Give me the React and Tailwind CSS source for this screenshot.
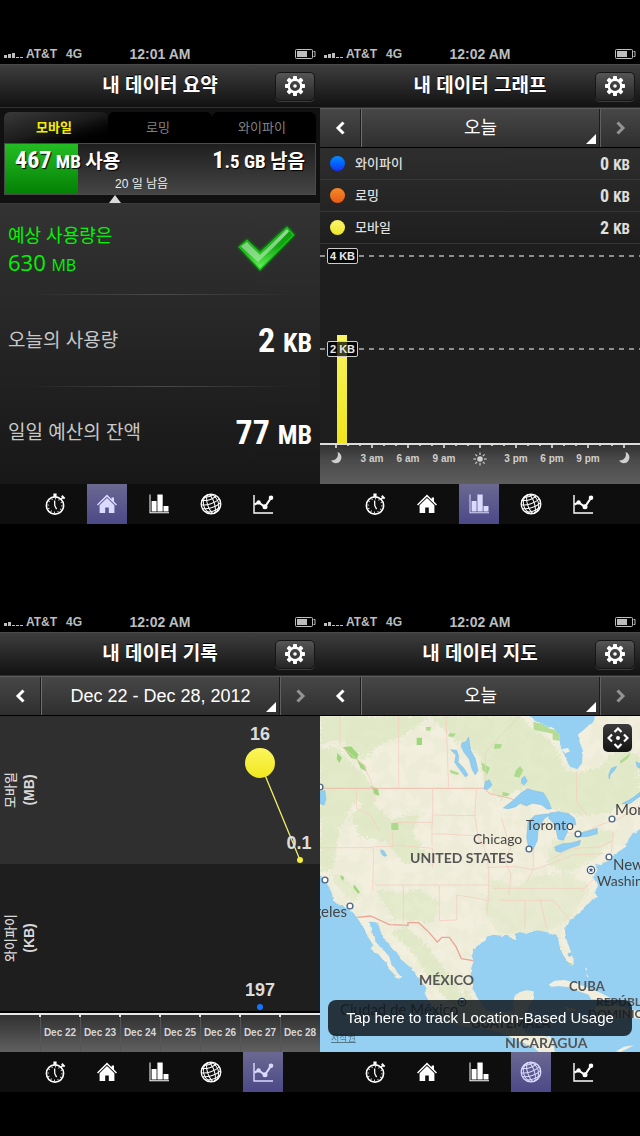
import { useState } from "react";
import clsx from "clsx";

/* ---------- ICONS ---------- */

const GearIcon = () => (
  <svg viewBox="0 0 20 20" className="size-5" fill="#fff" aria-hidden="true">
    {[0, 45, 90, 135, 180, 225, 270, 315].map((a) => (
      <rect key={a} x="8" y="0" width="4" height="4" rx="0.8" transform={`rotate(${a} 10 10)`} />
    ))}
    <circle cx="10" cy="10" r="6.3" fill="none" stroke="#fff" strokeWidth="2.4" />
    <circle cx="10" cy="10" r="1.8" />
  </svg>
);

const StopwatchIcon = () => (
  <svg viewBox="0 0 22 22" className="size-[22px]" fill="none" stroke="currentColor" aria-hidden="true">
    <circle cx="11" cy="12.5" r="8.6" strokeWidth="1.6" />
    <circle cx="11" cy="12.5" r="6.8" strokeWidth="1.4" strokeDasharray="0.8 2.76" />
    <path d="M11 0.5v3.4" strokeWidth="3.2" />
    <path d="M17 6.2l2.2-2.2" strokeWidth="1.6" />
    <path d="M17.8 2.8l2.8 2.8" strokeWidth="2" />
    <path d="M10.6 7.5l.2 5.2 1.8 3.4" strokeWidth="1.3" />
  </svg>
);

const HomeIcon = () => (
  <svg viewBox="0 0 22 22" className="size-[22px]" fill="currentColor" aria-hidden="true">
    <path d="M11 1.6L1 11.4l1 1L11 3.8l9 8.6 1-1-3-2.8V4.6h-2.4v1.7z" />
    <path d="M11 5L3.6 12.2V20h5.6v-5.6h3.6V20h5.6v-7.8z" />
  </svg>
);

const BarsIcon = () => (
  <svg viewBox="0 0 22 22" className="size-[22px]" fill="currentColor" aria-hidden="true">
    <path d="M1.5 1.5h1v17.8H21v1H1.5z" />
    <path d="M3.6 8h5v10.6h-5zM9.4 1.5h5.3v17.1H9.4zM15.5 13h5v5.6h-5z" />
  </svg>
);

const GlobeIcon = () => (
  <svg viewBox="0 0 22 22" className="size-[22px]" fill="none" stroke="currentColor" aria-hidden="true">
    <circle cx="11" cy="11" r="9.8" strokeWidth="1.3" />
    <g transform="rotate(-18 11 11)" strokeWidth="1">
      <ellipse cx="11" cy="11" rx="3.4" ry="9.8" />
      <ellipse cx="11" cy="11" rx="7.4" ry="9.8" />
      <path d="M3.6 4.8c4 2.2 10.8 2.2 14.8 0M1.4 8.6c5 2.8 14.2 2.8 19.2 0M1.4 12.6c5 2.8 14.2 2.8 19.2 0M3.2 16.6c4.6 2.2 11 2.2 15.6 0M6.4 2.6c3 1.1 6.2 1.1 9.2 0" />
    </g>
  </svg>
);

const TrendIcon = () => (
  <svg viewBox="0 0 22 22" className="size-[22px]" fill="none" stroke="currentColor" aria-hidden="true">
    <path d="M2 2v18h19" strokeWidth="1.4" />
    <path d="M2.5 11.5l4-2 6.5 4.4 6-9" strokeWidth="2" />
    <g fill="currentColor" stroke="none">
      <circle cx="6.6" cy="9.4" r="2.2" />
      <circle cx="13" cy="13.8" r="2.5" />
      <circle cx="19" cy="4.8" r="2.3" />
    </g>
  </svg>
);

const Chevron = ({ flip }) => (
  <svg viewBox="0 0 10 14" className="h-3.5 w-2.5" fill="none" aria-hidden="true">
    <path
      d={flip ? "M1.5 1.5L7 7l-5.5 5.5" : "M8.5 1.5L3 7l5.5 5.5"}
      stroke={flip ? "#949494" : "#fff"}
      strokeWidth="3"
    />
  </svg>
);

const CheckMark = () => (
  <svg viewBox="0 0 60 52" className="h-[52px] w-[60px] overflow-visible" role="img" aria-label="OK">
    <defs>
      <linearGradient id="check-fill" x1="0" y1="0" x2="0" y2="1">
        <stop offset="0" stopColor="#0c9a0c" />
        <stop offset="0.45" stopColor="#12a812" />
        <stop offset="1" stopColor="#6cf55e" />
      </linearGradient>
      <linearGradient id="check-shine" x1="0" y1="0" x2="0" y2="1">
        <stop offset="0" stopColor="#fff" stopOpacity="0.6" />
        <stop offset="1" stopColor="#fff" stopOpacity="0.35" />
      </linearGradient>
      <filter id="check-glow" x="-20%" y="-20%" width="140%" height="140%">
        <feGaussianBlur stdDeviation="1.2" />
      </filter>
    </defs>
    <path d="M1 24l9-8 13 12L50 3l8 9-35 36z" fill="#0b8a0b" stroke="#0b8a0b" filter="url(#check-glow)" />
    <path d="M2.5 24L10 17.5l13 12.5L50 4.5l6.5 7.5L23 46.5z" fill="url(#check-fill)" stroke="#1fc41f" strokeWidth="1.2" />
    <path d="M4 23.5l6-4.5 13 13L50 6l2 2.5L38 23 21 39z" fill="url(#check-shine)" />
  </svg>
);

/* ---------- SHARED PARTS ---------- */

const StatusBar = ({ time, bars }) => (
  <div className="grid h-5 grid-cols-[1fr_auto_1fr] items-center bg-black px-1 text-xs font-bold text-[#bdbdbd]">
    <div className="flex items-center gap-[3px]">
      <svg viewBox="0 0 19 10" className="h-2.5 w-[19px]" fill="#bdbdbd" role="img" aria-label="Signal">
        {[0, 1, 2, 3, 4].map((i) => {
          const h = i < bars ? 3 + i : 1;
          return <rect key={i} x={i * 4} y={9 - h} width="3" height={h} />;
        })}
      </svg>
      <span>AT&amp;T</span>
      <span className="ml-1.5">4G</span>
    </div>
    <span className="text-sm">{time}</span>
    <svg viewBox="0 0 21 11" className="h-[11px] w-[21px] justify-self-end" role="img" aria-label="Battery">
      <rect x="0.5" y="0.5" width="17" height="9" rx="1" fill="none" stroke="#bdbdbd" />
      <rect x="2" y="2" width="10" height="6" fill="#bdbdbd" />
      <path d="M18.5 2.5h1.5v5h-1.5" fill="none" stroke="#bdbdbd" />
    </svg>
  </div>
);

const NavBar = ({ title }) => (
  <header className="grid h-11 grid-cols-[1fr_auto_1fr] items-center border-t border-b border-t-[#4a4a4a] border-b-[#303030] bg-linear-to-b from-[#3e3e3e] to-[#121212] px-[5px]">
    <h1 className="col-start-2 text-[19px] leading-6 font-bold text-white [text-shadow:0_-1px_0_#000]">
      {title}
    </h1>
    <button
      type="button"
      aria-label="Settings"
      className="flex h-[29px] w-10 items-center justify-center justify-self-end rounded-[5px] border border-[#161616] bg-linear-to-b from-[#555] to-[#262626] shadow-[0_1px_0_#3c3c3c]"
    >
      <GearIcon />
    </button>
  </header>
);

const RangeBar = ({ label }) => (
  <div className="grid h-10 shrink-0 grid-cols-[41px_1fr_40px] border-t border-b border-t-[#5c5c5c] border-b-black bg-linear-to-b from-[#474747] to-[#2f2f2f]">
    <button type="button" aria-label="Previous" className="flex items-center justify-center border-r border-[#1c1c1c]">
      <Chevron />
    </button>
    <div className="relative border-r border-l border-r-[#1c1c1c] border-l-[#707070]">
      <select
        aria-label="Period"
        className="block size-full appearance-none bg-transparent text-center text-lg leading-6 text-white"
      >
        <option>{label}</option>
      </select>
      <svg viewBox="0 0 10 10" className="pointer-events-none absolute right-[3px] bottom-[3px] size-2.5" aria-hidden="true">
        <path d="M10 0v10H0z" fill="#fff" />
      </svg>
    </div>
    <button type="button" aria-label="Next" className="flex items-center justify-center border-l border-[#606060]">
      <Chevron flip />
    </button>
  </div>
);

const TABS = [
  { id: "plan", label: "Plan", Icon: StopwatchIcon },
  { id: "home", label: "Home", Icon: HomeIcon },
  { id: "graph", label: "Graph", Icon: BarsIcon },
  { id: "map", label: "Map", Icon: GlobeIcon },
  { id: "history", label: "History", Icon: TrendIcon },
];

const TabBar = ({ active }) => (
  <nav className="flex h-10 shrink-0 justify-center gap-3 bg-[#0e0e0e] pr-0.5">
    {TABS.map(({ id, label, Icon }) => (
      <button
        key={id}
        type="button"
        aria-label={label}
        className={clsx(
          "flex w-10 items-center justify-center",
          id === active ? "bg-linear-to-b from-[#6b6890] to-[#4c4988] text-[#dcd9ff]" : "text-white"
        )}
      >
        <Icon />
      </button>
    ))}
  </nav>
);

const Screen = ({ title, time, bars, tab, children }) => (
  <section className="flex flex-col py-11">
    <StatusBar time={time} bars={bars} />
    <NavBar title={title} />
    <div className="flex flex-1 flex-col">{children}</div>
    <TabBar active={tab} />
  </section>
);

/* ---------- SUMMARY ---------- */

const NARROW = "[font-family:'Roboto_Condensed','Roboto','Noto_Sans_CJK_KR',sans-serif]";

const Divider = () => (
  <div className="mx-6 h-px bg-linear-to-r from-transparent via-[#4a4a4a] to-transparent" />
);

const Stat = ({ label, value, unit }) => (
  <div className="flex h-[91px] items-center justify-between px-2">
    <span className="text-[19px] leading-6 text-[#c8c8c8]">{label}</span>
    <span className={clsx(NARROW, "pt-0.5 text-[34px] leading-10 font-bold text-white")}>
      {value} <span className="text-[26px]">{unit}</span>
    </span>
  </div>
);

const Summary = () => {
  const [kind, setKind] = useState("모바일");

  return (
    <>
      <div className="bg-[#111] px-1 pt-1">
        <div className="flex h-[31px]">
          {["모바일", "로밍", "와이파이"].map((name) => (
            <button
              key={name}
              type="button"
              onClick={() => setKind(name)}
              className={clsx(
                "flex-1 rounded-t-md pr-1 text-[13px] leading-4",
                name === kind
                  ? "bg-linear-to-br from-[#3a3a3a] via-[#1c1c1c] to-black font-bold text-[#f5ee00]"
                  : "bg-black text-[#808080]"
              )}
            >
              {name}
            </button>
          ))}
        </div>
        <div className="relative h-[52px] border border-[#4a4a4a] bg-linear-to-b from-[#1f1f1f] to-[#454545]">
          <div className="absolute inset-y-0 left-0 w-[73px] bg-linear-to-b from-[#23bd23] to-[#038003]" />
          <div
            className={clsx(
              NARROW,
              "relative flex justify-between px-2.5 text-[19px] leading-8 font-bold text-white [text-shadow:1px_1px_1px_#000]"
            )}
          >
            <span><span className="text-2xl leading-8">467</span> MB 사용</span>
            <span><span className="text-2xl leading-8">1</span>.5 GB 남음</span>
          </div>
          <div className="relative pl-[110px] text-xs leading-3 text-[#eee]">20 일 남음</div>
        </div>
        <svg viewBox="0 0 12 8" className="ml-[105px] block h-2 w-3" aria-hidden="true">
          <path d="M6 0l6 8H0z" fill="#dadada" />
        </svg>
      </div>

      <div className="flex-1 border-t border-[#3a3a3a] bg-linear-to-b from-[#333] to-[#171717]">
        <div className="flex h-[90px] items-center justify-between pr-[23px] pl-2 text-[#00f500]">
          <div>
            <p className="text-lg leading-7">예상 사용량은</p>
            <p className="text-[22px] leading-6 [font-family:'Open_Sans','Noto_Sans',sans-serif]">
              630 <span className="text-base leading-6">MB</span>
            </p>
          </div>
          <CheckMark />
        </div>
        <Divider />
        <Stat label="오늘의 사용량" value="2" unit="KB" />
        <Divider />
        <Stat label="일일 예산의 잔액" value="77" unit="MB" />
      </div>
    </>
  );
};

/* ---------- GRAPH ---------- */

const LEGEND = [
  { name: "와이파이", value: "0", dot: "bg-linear-to-b from-[#0a8cff] to-[#1a2cf5]" },
  { name: "로밍", value: "0", dot: "bg-linear-to-b from-[#f58a28] to-[#e85a14]" },
  { name: "모바일", value: "2", dot: "bg-linear-to-b from-[#fbf56a] to-[#f0e61e]" },
];

const HOURS = ["moon", "3 am", "6 am", "9 am", "sun", "3 pm", "6 pm", "9 pm", "moon"];

const UsageGraph = () => (
  <svg viewBox="0 0 320 240" className="block w-full" role="img" aria-label="Usage today">
    <defs>
      <linearGradient id="hour-axis" x1="0" y1="0" x2="0" y2="1">
        <stop offset="0" stopColor="#303030" />
        <stop offset="0.4" stopColor="#4a4a4a" />
        <stop offset="1" stopColor="#5e5e5e" />
      </linearGradient>
      <linearGradient id="usage-bar" x1="0" y1="0" x2="0" y2="1">
        <stop offset="0" stopColor="#f9f560" />
        <stop offset="1" stopColor="#efe51c" />
      </linearGradient>
    </defs>
    <rect width="320" height="240" fill="#1e1e1e" />
    <rect y="200" width="320" height="40" fill="url(#hour-axis)" />
    <rect x="17" y="91" width="10" height="108" fill="url(#usage-bar)" />
    {[{ y: 12, text: "4 KB" }, { y: 105, text: "2 KB" }].map(({ y, text }) => (
      <g key={y}>
        <path d={`M0 ${y}h5M39 ${y}H320`} stroke="#b4b4b4" strokeWidth="1.4" strokeDasharray="5 5" />
        <rect x="7.5" y={y - 7.5} width="30" height="15" rx="1.5" fill="#000" fillOpacity="0.75" stroke="#ccc" />
        <text x="22.5" y={y + 4} fontSize="11" fontWeight="bold" fill="#e8e8e8" textAnchor="middle">{text}</text>
      </g>
    ))}
    <rect y="199" width="320" height="2" fill="#dcdcdc" />
    {Array.from({ length: 25 }, (_, i) => (
      <rect key={i} x={15 + i * 12} y="201" width="2" height={i % 3 === 0 ? 3 : 1} fill="#c0c0c0" />
    ))}
    {HOURS.map((h, i) => {
      const x = 16 + i * 36;
      if (h === "moon") {
        return (
          <path
            key={i}
            d={`M${x + 1.5} 208a5.7 5.7 0 1 1-6.5 8.5a6.2 6.2 0 0 0 6.5-8.5z`}
            fill="#cfcfcf"
          />
        );
      }
      if (h === "sun") {
        return (
          <g key={i} stroke="#cfcfcf" strokeWidth="1.2">
            <circle cx={x} cy="215" r="2.8" fill="#cfcfcf" stroke="none" />
            {[0, 45, 90, 135, 180, 225, 270, 315].map((a) => (
              <path key={a} d={`M${x} 208.4v2.6`} transform={`rotate(${a} ${x} 215)`} />
            ))}
          </g>
        );
      }
      return (
        <text key={i} x={x} y="218" fontSize="10" fontWeight="bold" fill="#cfcfcf" textAnchor="middle">{h}</text>
      );
    })}
  </svg>
);

const Graph = () => (
  <>
    <RangeBar label="오늘" />
    <ul className="bg-linear-to-b from-[#2e2e2e] to-[#1e1e1e]">
      {LEGEND.map(({ name, value, dot }) => (
        <li key={name} className="flex h-8 items-center border-b border-[#363636] px-2.5">
          <span className={clsx("size-[15px] rounded-full", dot)} />
          <span className="ml-2.5 text-[13px] leading-5 font-medium text-[#dedede]">{name}</span>
          <span className={clsx(NARROW, "ml-auto pt-0.5 text-lg leading-6 font-bold text-[#dedede]")}>
            {value} <span className="text-[15px]">KB</span>
          </span>
        </li>
      ))}
    </ul>
    <div className="flex-1 bg-[#1e1e1e]">
      <UsageGraph />
    </div>
  </>
);

/* ---------- HISTORY ---------- */

const DAYS = ["Dec 22", "Dec 23", "Dec 24", "Dec 25", "Dec 26", "Dec 27", "Dec 28"];

const History = () => (
  <>
    <RangeBar label="Dec 22 - Dec 28, 2012" />
    <svg viewBox="0 0 320 336" className="block w-full" role="img" aria-label="Usage history">
      <defs>
        <linearGradient id="day-axis" x1="0" y1="0" x2="0" y2="1">
          <stop offset="0" stopColor="#2e2e2e" />
          <stop offset="1" stopColor="#606060" />
        </linearGradient>
        <linearGradient id="mobile-dot" x1="0" y1="0" x2="0" y2="1">
          <stop offset="0" stopColor="#fbf65c" />
          <stop offset="1" stopColor="#f0e71e" />
        </linearGradient>
      </defs>
      <rect width="320" height="148" fill="#2f2f2f" />
      <rect y="148" width="320" height="149" fill="#1e1e1e" />
      <rect y="295" width="320" height="2" fill="#000" />
      <rect y="297" width="320" height="39" fill="url(#day-axis)" />
      <rect y="297" width="320" height="2" fill="#e6e6e6" />
      {DAYS.map((day, i) => (
        <g key={day}>
          <rect x={40 + i * 40} y="300" width="1" height="36" fill="#555" />
          <rect x={39 + i * 40} y="297" width="2" height="4" fill="#e6e6e6" />
          <text x={60 + i * 40} y="320" fontSize="10" fontWeight="bold" fill="#d6d6d6" textAnchor="middle">{day}</text>
        </g>
      ))}

      <g fill="#d8d8d8" textAnchor="middle">
        <g transform="translate(15 74) rotate(-90)">
          <text fontSize="13" fontWeight="500">모바일</text>
          <text y="19" fontSize="14" fontWeight="bold">(MB)</text>
        </g>
        <g transform="translate(15 222) rotate(-90)">
          <text fontSize="13" fontWeight="500">와이파이</text>
          <text y="19" fontSize="14" fontWeight="bold">(KB)</text>
        </g>
      </g>

      <path d="M260 47l40 97" stroke="#f3ee6a" strokeWidth="1.3" />
      <g fill="#dcdcdc" fontSize="18" fontWeight="bold" textAnchor="middle">
        <text x="260" y="24">16</text>
        <text x="299" y="133">0.1</text>
        <text x="260" y="280">197</text>
      </g>
      <circle cx="260" cy="47" r="15" fill="url(#mobile-dot)" />
      <circle cx="300" cy="144" r="3" fill="#f5ee3c" />
      <circle cx="260" cy="291" r="3" fill="#1478ff" />
    </svg>
  </>
);

/* ---------- MAP ---------- */

const CITIES = [
  [0, 71], [209, 133], [258, 118], [292, 103], [289, 141], [5, 164], [30, 190],
];

const CAPITALS = [[271, 154], [142, 286]];

const UsMap = () => (
  <svg
    viewBox="0 0 320 336"
    preserveAspectRatio="xMidYMid slice"
    className="absolute inset-0 size-full"
    role="img"
    aria-label="Map of North America"
  >
    <defs>
      <clipPath id="land-clip">
        <use href="#land" />
      </clipPath>
      <filter id="rough" x="-5%" y="-5%" width="110%" height="110%">
        <feTurbulence type="fractalNoise" baseFrequency="0.12" numOctaves="3" seed="4" result="n" />
        <feDisplacementMap in="SourceGraphic" in2="n" scale="30" xChannelSelector="R" yChannelSelector="G" />
        <feGaussianBlur stdDeviation="1" />
      </filter>
      <filter id="coast" x="-5%" y="-5%" width="110%" height="110%">
        <feTurbulence type="fractalNoise" baseFrequency="0.2" numOctaves="2" seed="9" result="n" />
        <feDisplacementMap in="SourceGraphic" in2="n" scale="3" xChannelSelector="R" yChannelSelector="G" />
      </filter>
      <filter id="speckle" x="0" y="0" width="100%" height="100%">
        <feTurbulence type="fractalNoise" baseFrequency="0.07" numOctaves="4" seed="21" result="n" />
        <feColorMatrix in="n" type="matrix" values="0 0 0 0 0  0 0 0 0 0  0 0 0 0 0  0 0 0 -6 3.4" result="m" />
        <feComposite in="SourceGraphic" in2="m" operator="out" />
      </filter>
      <path
        id="land"
        transform="scale(0.3333) translate(0 432)"
        d="M-10-440V35L0 45 14 60 24 76 36 100 40 125 58 134 75 140 100 158 112 175 124 192 135 210 140 226 150 240 160 256 152 265 164 278 175 282 190 300 200 310 205 325 222 342 236 361 243 350 232 338 225 325 214 312 208 290 194 274 180 262 170 246 160 228 152 205 149 185 160 186 176 195 182 215 190 236 206 250 216 266 232 280 250 305 275 325 290 345 305 365 320 385 313 400 322 418 340 440 380 480 430 500 510 510 545 520 600 545 640 560 660 580 706 580 698 545 690 528 650 524 615 520 603 500 606 480 615 472 626 440 640 410 641 394 620 391 600 396 585 406 580 430 578 452 540 458 510 456 490 440 472 414 458 385 452 350 454 325 460 305 454 285 458 268 472 258 482 248 496 244 500 230 520 224 545 227 560 224 568 232 590 238 584 222 600 216 620 222 636 214 655 211 680 216 692 226 704 222 714 228 718 256 728 282 740 300 752 317 761 312 760 294 750 268 740 240 735 216 738 198 746 184 760 174 772 162 790 148 800 134 820 120 830 108 826 92 834 78 820 52 832 30 826 12 846 16 850 8 868 2 888-20 918-40 926-62 938-80 970-98V-440H826L822-418 800-398 774-376 780-350 789-330 786-290 772-272 750-280 738-304 726-330 720-350 718-378 700-396 664-408 640-420 622-440z"
      />
    </defs>

    <rect width="320" height="336" fill="#95d0f3" />
    <g filter="url(#coast)">
      <use href="#land" fill="#f3efdf" />
    </g>

    <g clipPath="url(#land-clip)">
      {/* forests */}
      <g transform="scale(0.3333)" fill="#e2eaca" filter="url(#rough)">
        <path d="M0 0H330L250 60 190 80 130 130 90 90 40 70 0 90z" />
        <path d="M0 100L50 90 90 140 130 170 170 230 150 280 110 250 60 330 40 460 0 470z" />
        <path d="M330 0H600L640 40 700 80 740 170 830 160 900 90 960 120V230L870 290 780 300 700 280 620 210 540 250 490 200 480 120 400 70z" />
        <path d="M150 250l60 60 90-20-20 60 40 70-60 30-60-70-80-20-30-60z" />
        <path d="M30 470l50 20 40 50-20 20-60-60zM170 520l70 10 60-10 60 40-20 60-120-10z" opacity="0.85" />
        <path d="M510 490l80 20 60-30 90-10 70 40-50 90-100 60-130-10-40-70z" opacity="0.7" />
        <path d="M700 370l120-30 70 10-60 80-100 40-50-30z" opacity="0.8" />
        <path d="M210 650l60 50 60 90 90 110 60 10-90-130-70-90-60-60zM420 800l40 50 40 60-30 10z" />
      </g>
      <g filter="url(#speckle)">
        <rect width="320" height="336" fill="#d9e5be" opacity="0.22" />
      </g>

      {/* parks */}
      <g transform="scale(0.3333) translate(0 -333)" fill="#9fd67c">
        <path d="M68 426l25-2 22 24-4 16-18-6zM290 398h16v22h-16zM52 444l14 14-8 16-8-12zM110 462l26 20 4 18-18-10zM152 542l22 10 4 20-14-4z" />
        <path d="M214 654h21v21h-21zM390 384l18 2-8 10-16-2zM318 366l16 0-4 12-12-2zM524 416l22 2-4 12-20 2zM484 472l26 16-8 20-14-12zM390 494l28 10-6 6-20-6zM548 560l22 6-8 8-14-2zM588 496l12-12 10 12-12 22-16-4z" opacity="0.8" />
        <path d="M640 350l30 8 20 14 32 4v32l-24-4v-18l-56-12zM900 468l32-24-8 16-22 16z" opacity="0.75" />
        <path d="M62 810l10 6-2 12-8-8zM102 838l18 24-6 4-14-18zM742 1072l14 4-8 6z" />
      </g>

      {/* borders and highways */}
      <g transform="scale(0.3333) translate(0 -333)" fill="none" stroke="#f4cfc2" strokeWidth="2.5">
        <path d="M0 550H490l20 16 60 14 40 20" stroke="#eeb3a4" />
        <path d="M60 333V420l70 60 24 50 12 60M236 333V548M378 333l8 215M600 333l-60 60-44 50v90" />
        <path d="M110 550v60l40 20 30 50M338 550v108M224 652h112v70M338 630l130 2M338 686l132 6 26 30M0 728h160v50l-2 80M218 680v40l120 10v60M160 725l60 0" />
        <path d="M470 550l-6 80 10 60 20 40 12 60v80l-6 60M545 640l14 50 14 40-20 30 20 50-6 60M640 732v60l-20 40M500 788l80-4 60 10 60-20 60-24 90-4" />
        <path d="M165 840h340M250 842v110M358 842v105l52-2V870l50 8 50 10M520 850h270M615 884v88M660 880l20 90M540 886h160l50 60" />
        <path d="M690 620l40 60 50 10 60-30 60-20 60-40M770 500v90l30 40M880 680l-6 60-30 60-60 60M700 760l60-30 80-4 40-20" />
      </g>
      <path
        transform="scale(0.3333) translate(0 432)"
        d="M112 172l40-4 56 26 56 2v-8h32l26 24 30 34 14-14h22l20 28 16 36 36 6"
        fill="none"
        stroke="#eba596"
        strokeWidth="4"
      />
    </g>

    {/* lakes and islands */}
    <g transform="scale(0.3333) translate(0 -333)" fill="#8fcdf2" stroke="#7db9e0" strokeWidth="1.5">
      <path d="M550 609l28-22 24-22 20-14 20 6 28 6 16 26 8 22-12 2-18-14-26-4-20 8-16-10-14 12-22 6z" />
      <path d="M624 650l20-18 26-4 26-2-22 14-14 20 -6 18-2 28-12 26-14-4-6-30z" />
      <path d="M690 624l26-4 30 6 18 14 4 20-14-2-12-6 0 30-12 24-16-4-6-30-8-18-14-14z" />
      <path d="M704 726l24-10 26-2 28-8-4 14-30 10-26 12-14-4z" />
      <path d="M780 684l24-6 28-8 0 16-28 8-20 2z" />
      <path d="M426 414l12-4 8-14 2 16 4 24 14 26 8 34-8 14-10-18-8-30-16-20-8-18z" />
      <path d="M392 434l18 2 6 18-2 18 18 18 12 20-8 6-16-22-16-22 4-22z" />
      <path d="M496 530l12-6 8 16-14 14-10-4zM606 520l8-6 8 14-10 12-8-6zM182 734l10 4 8 14-8 2-8-8z" />
      <path d="M866 510l8-20 16-6-6 12-12 12-4 14zM906 596l30-16 24-18v12l-30 22zM948 470l12 6v14l-8-4z" />
      <path d="M0 560l14-4 4 26-6 18-12-4z" />
      <circle cx="749" cy="1049" r="5" />
    </g>
    <g transform="scale(0.3333) translate(0 432)" fill="#f3efdf">
      <path d="M686 374l18-12 30-2 30 8 36 14 36 14 36 18-18 6-40-2-8-14-30-10-26-12-34-4-22 2zM826 440l40-8 50 10 44 14v20l-50-4-50 4-40-6zM730 440l34 4 6 10-26 0zM796 322l6 6-4 4zM798 340l8 10-4 2zM888 574l24-14 30-4-20 10-20 10z" />
      <path d="M724-332l20-4 6 10-14 6z" />
    </g>

    {/* cities */}
    <g fill="#fff" stroke="#4d688c" strokeWidth="1.4">
      {CITIES.map(([x, y]) => (
        <circle key={`${x}-${y}`} cx={x} cy={y} r="2.9" />
      ))}
    </g>
    {CAPITALS.map(([x, y]) => (
      <g key={`${x}-${y}`}>
        <circle cx={x} cy={y} r="3.7" fill="#fff" stroke="#3d5678" strokeWidth="1.2" />
        <path
          transform={`translate(${x} ${y})`}
          d="M0-2.6l.7 1.8h1.8L1 .4l.6 1.8L0 1.1l-1.6 1.1L-1 .4l-1.5-1.2h1.8z"
          fill="#3d5678"
        />
      </g>
    ))}

    <g className="[font-family:Lato,'Open_Sans',sans-serif]" fill="#444">
      <g fontSize="15">
        <text x="206" y="114" fontSize="14">Toronto</text>
        <text x="153" y="128" fontSize="14">Chicago</text>
        <text x="295" y="99">Montréal</text>
        <text x="293" y="154">New York</text>
        <text x="277" y="170" fontSize="14">Washington</text>
        <text x="27" y="201" textAnchor="end">Los Angeles</text>
        <text x="20" y="299">Ciudad de México</text>
      </g>
      <g fontSize="13" fontWeight="bold" fill="#555">
        <text x="90" y="147" fontSize="14">UNITED STATES</text>
        <text x="99" y="269" fontSize="14">MÉXICO</text>
        <text x="249" y="275">CUBA</text>
        <text x="276" y="290" fontSize="12">REPÚBLICA</text>
        <text x="268" y="302" fontSize="12">DOMINICANA</text>
        <text x="151" y="312">GUATEMALA</text>
        <text x="185" y="332" fontSize="14">NICARAGUA</text>
      </g>
    </g>
  </svg>
);

const LocationMap = () => (
  <>
    <RangeBar label="오늘" />
    <div className="relative flex flex-1 flex-col justify-between overflow-hidden p-2">
      <UsMap />
      <button
        type="button"
        aria-label="Center map"
        className="relative flex h-7 w-[29px] items-center justify-center self-end rounded-[5px] bg-linear-to-b from-[#3c3c3c] to-[#141414]"
      >
        <svg viewBox="0 0 22 22" className="size-[22px]" fill="none" stroke="#fff" strokeWidth="2.2" aria-hidden="true">
          <path d="M7.5 5L11 1.5 14.5 5M7.5 17l3.5 3.5 3.5-3.5M5 7.5L1.5 11 5 14.5M17 7.5l3.5 3.5-3.5 3.5" />
          <circle cx="11" cy="11" r="2" fill="#fff" stroke="none" />
        </svg>
      </button>
      <a href="#legal" className="absolute bottom-2 left-[11px] text-[9px] leading-3 text-[#56788c] underline">
        저작권
      </a>
      <button
        type="button"
        className="relative mb-2 h-9 rounded-lg bg-[#10181c]/85 text-[15px] leading-5 text-white"
      >
        Tap here to track Location-Based Usage
      </button>
    </div>
  </>
);

export default function App() {
  return (
    <main className="grid min-h-screen grid-cols-2 grid-rows-2 bg-black [font-family:'Liberation_Sans','Noto_Sans_CJK_KR',sans-serif]">
      <Screen title="내 데이터 요약" time="12:01 AM" bars={3} tab="home">
        <Summary />
      </Screen>
      <Screen title="내 데이터 그래프" time="12:02 AM" bars={3} tab="graph">
        <Graph />
      </Screen>
      <Screen title="내 데이터 기록" time="12:02 AM" bars={2} tab="history">
        <History />
      </Screen>
      <Screen title="내 데이터 지도" time="12:02 AM" bars={2} tab="map">
        <LocationMap />
      </Screen>
    </main>
  );
}
